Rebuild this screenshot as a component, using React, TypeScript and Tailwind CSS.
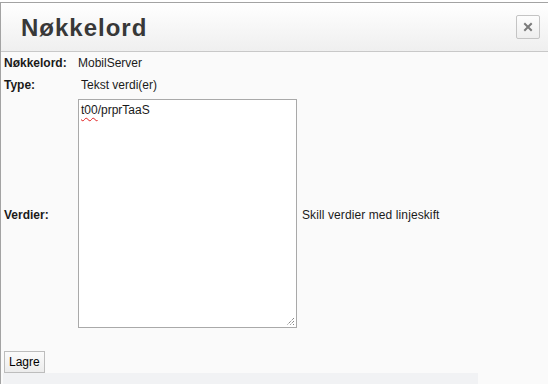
import React from "react";

export default function App() {
  return (
    <div
      className="w-[548px] h-[384px] bg-white overflow-hidden pt-[2px]"
      style={{ fontFamily: '"Liberation Sans", Arial, sans-serif' }}
    >
      <div className="h-[382px] border-t border-l border-[#a3a3a3] bg-[#fafafa] flex flex-col">
        {/* Header */}
        <div className="h-[49px] shrink-0 flex items-center justify-between pl-[20px] pr-[8px] border-b border-[#c8c8c8] bg-gradient-to-b from-white to-[#efefef]">
          <h1 className="text-[24px] font-bold text-[#383838] leading-none tracking-[1px] pt-[2px]">Nøkkelord</h1>
          <button className="w-[24px] h-[24px] border border-[#c4c4c4] rounded-[2px] bg-gradient-to-b from-[#fdfdfd] to-[#eeeeee] flex items-center justify-center">
            <svg width="10" height="10" viewBox="0 0 10 10">
              <path d="M2 2 L8 8 M8 2 L2 8" stroke="#7a7a7a" strokeWidth="2" strokeLinecap="square" />
            </svg>
          </button>
        </div>

        {/* Body */}
        <div className="flex flex-col text-[12px] text-[#1a1a1a]">
          <div className="h-[22px] flex items-center">
            <div className="w-[77px] pl-[3px] font-bold">Nøkkelord:</div>
            <div>MobilServer</div>
          </div>
          <div className="h-[22px] flex items-center">
            <div className="w-[77px] pl-[3px] font-bold">Type:</div>
            <div className="pl-[3px]">Tekst verdi(er)</div>
          </div>
          <div className="flex items-center mt-[3px]">
            <div className="w-[77px] pl-[3px] font-bold pt-[3px]">Verdier:</div>
            <div className="relative w-[219px] h-[229px] bg-white border border-[#a9a9a9] pl-[2px] pt-[3px] leading-[14px]">
              <span className="underline decoration-wavy decoration-[#e02020] decoration-1 underline-offset-[3px]">t00</span>
              /prprTaaS
              <svg className="absolute right-[1px] bottom-[1px]" width="10" height="10" viewBox="0 0 10 10">
                <path d="M9 2 L2 9 M9 5 L5 9 M9 8 L8 9" stroke="#555" strokeWidth="1" strokeDasharray="1 1" />
              </svg>
            </div>
            <div className="pl-[5px] pt-[3px] tracking-[0.1px]">Skill verdier med linjeskift</div>
          </div>
          <div className="mt-[23px] pl-[3px]">
            <button className="h-[22px] px-[4px] border border-[#bdbdbd] bg-gradient-to-b from-[#fbfbfb] to-[#ececec] text-[12px] text-black leading-none">
              Lagre
            </button>
          </div>
          <div className="ml-[2px] w-[475px] h-[12px] bg-[#f1f2f4]" />
        </div>
      </div>
    </div>
  );
}
